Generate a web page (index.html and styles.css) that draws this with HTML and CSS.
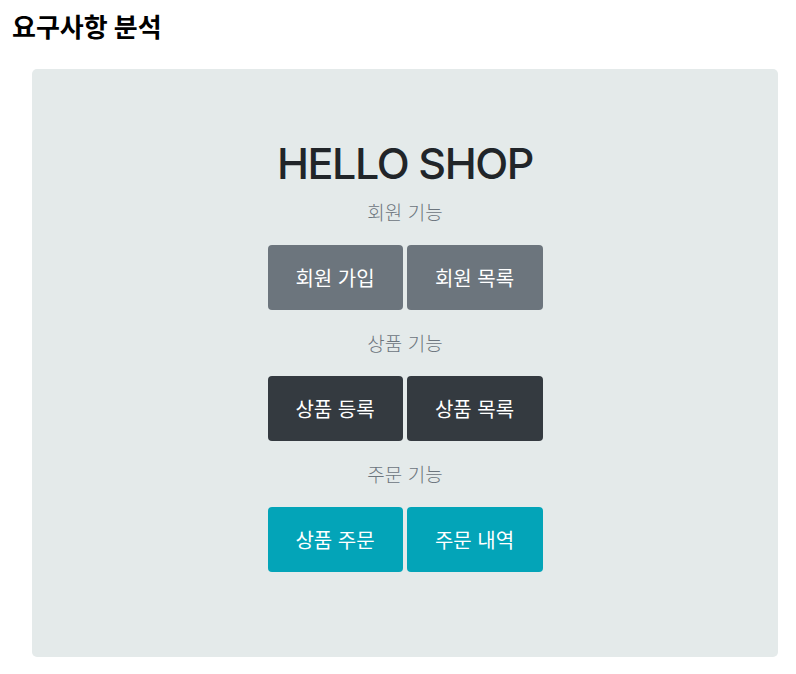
FILE: index.html
```html
<!DOCTYPE html>
<html lang="ko">
<head>
<meta charset="utf-8">
<title>요구사항 분석</title>
<link rel="stylesheet" href="styles.css">
</head>
<body>
<h3 class="page-title">요구사항 분석</h3>
<div class="jumbo">
  <h1 class="shop-title">HELLO SHOP</h1>
  <div class="section">
    <p class="label">회원 기능</p>
    <div class="btns">
      <a class="btn btn-secondary">회원 가입</a>
      <a class="btn btn-secondary">회원 목록</a>
    </div>
  </div>
  <div class="section">
    <p class="label">상품 기능</p>
    <div class="btns">
      <a class="btn btn-dark">상품 등록</a>
      <a class="btn btn-dark">상품 목록</a>
    </div>
  </div>
  <div class="section">
    <p class="label">주문 기능</p>
    <div class="btns">
      <a class="btn btn-info">상품 주문</a>
      <a class="btn btn-info">주문 내역</a>
    </div>
  </div>
</div>
</body>
</html>
```
FILE: styles.css
```css
* { box-sizing: border-box; }
body {
  margin: 0;
  font-family: Inter, "Noto Sans CJK KR", sans-serif;
  background: #fff;
  color: #212529;
}
.page-title {
  margin: 0;
  padding: 9px 0 0 12px;
  height: 69px;
  font-size: 26px;
  font-weight: 700;
  line-height: 38px;
  color: #000;
}
.jumbo {
  margin-left: 32px;
  width: 746px;
  height: 588px;
  background: #e4eaea;
  border-radius: 5px;
  padding-top: 66px;
  display: flex;
  flex-direction: column;
  align-items: center;
}
.shop-title {
  margin: 0 0 8px;
  font-size: 43px;
  font-weight: 500;
  line-height: 56px;
  color: #212529;
  letter-spacing: -1.4px;
}
.section {
  display: flex;
  flex-direction: column;
  align-items: center;
}
.section + .section { margin-top: 20px; }
.label {
  margin: 0 0 16px;
  font-size: 19px;
  line-height: 30px;
  color: #6c757d;
  font-weight: 300;
}
.btns {
  display: flex;
  gap: 4px;
}
.btn {
  display: flex;
  align-items: center;
  justify-content: center;
  width: 135px;
  height: 65px;
  border-radius: 4px;
  color: #fff;
  font-size: 20px;
  font-weight: 400;
}
.btn + .btn { width: 136px; }
.btn-secondary { background: #6c757d; }
.btn-dark { background: #343a40; }
.btn-info { background: #03a4b8; }
```
